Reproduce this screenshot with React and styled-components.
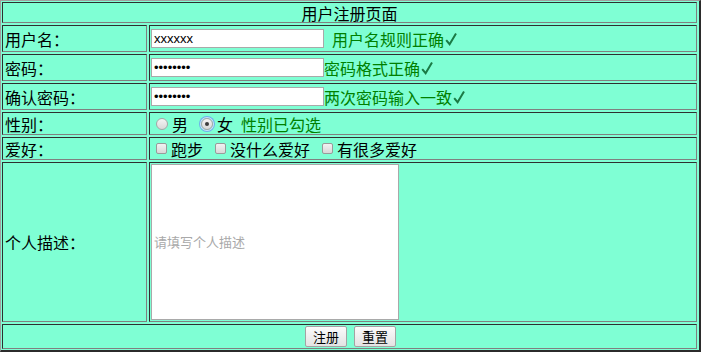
import React from 'react';
import styled, { createGlobalStyle } from 'styled-components';

const GlobalStyle = createGlobalStyle`
  body {
    margin: 0;
    background: #ffffff;
    font-family: "Noto Sans CJK SC", "Liberation Sans", sans-serif;
  }
`;

const Form = styled.form`
  display: grid;
  grid-template-columns: 145px 1fr;
  grid-template-rows: 21px 27px 27px 27px 23px 23px 160px 25px;
  gap: 2px;
  width: 701px;
  box-sizing: border-box;
  padding: 1px 2px 1px 1px;
  border-style: solid;
  border-width: 1px 2px 2px 1px;
  border-color: #a0a0a0 #2b2b2b #2b2b2b #a0a0a0;
  background: #7fffd4;
  font-size: 16px;
  color: #000;
`;

const Cell = styled.div`
  display: flex;
  align-items: center;
  justify-content: ${(p) => (p.$center ? 'center' : 'flex-start')};
  grid-column: ${(p) => (p.$span ? '1 / -1' : 'auto')};
  border: 1px solid;
  border-color: #2f2f2f #808080 #808080 #2f2f2f;
  padding: 1px;
  min-width: 0;
  white-space: nowrap;
  line-height: 1;
`;

const Label = styled.span`
  padding-left: 1px;
`;

const TextInput = styled.input`
  box-sizing: border-box;
  width: ${(p) => p.$w || 173}px;
  height: ${(p) => p.$h || 19}px;
  margin: 0;
  padding: 1px 2px;
  border: 1px solid #a9a9a9;
  background: #fff;
  font-family: "Liberation Sans", "Noto Sans CJK SC", sans-serif;
  font-size: 13px;
  color: #000;
  outline: none;

  &::placeholder {
    color: #a9a9a9;
    font-family: "Noto Sans CJK SC", sans-serif;
  }
`;

const Hint = styled.span`
  display: inline-flex;
  align-items: center;
  color: #008000;
  margin-left: ${(p) => p.$gap || 0}px;
`;

const TickIcon = styled.svg`
  width: 12px;
  height: 14px;
  margin-left: 1px;
  margin-top: 1px;
`;

const Tick = () => (
  <TickIcon viewBox="0 0 12 14">
    <path d="M1.2 8.2 L4.6 12.2 L11 1.5" fill="none" stroke="#1b7a45" strokeWidth="2" strokeLinejoin="miter" />
  </TickIcon>
);

const Choice = styled.span`
  display: inline-flex;
  align-items: center;
  margin-right: ${(p) => p.$after || 0}px;
`;

const Radio = styled.span`
  box-sizing: border-box;
  width: 12px;
  height: 12px;
  border-radius: 50%;
  border: 1px solid #a6a6a6;
  background: linear-gradient(#f4f4f4, #d9d9d9);
  display: inline-flex;
  align-items: center;
  justify-content: center;
  margin-right: 4px;

  ${(p) =>
    p.$checked &&
    `
    box-shadow: 0 0 0 1px #c9e3f9, 0 0 0 2px #6fb0ea;
    &::after {
      content: '';
      width: 4px;
      height: 4px;
      border-radius: 50%;
      background: #3c3c3c;
    }
  `}
`;

const Box = styled.span`
  box-sizing: border-box;
  width: 11px;
  height: 11px;
  border-radius: 2px;
  border: 1px solid #9a9a9a;
  background: linear-gradient(#f2f2f2, #d8d8d8);
  margin-right: 4px;
`;

const Button = styled.button`
  box-sizing: border-box;
  height: 21px;
  padding: 0 7px;
  border: 1px solid #a3a3a3;
  border-radius: 2px;
  background: linear-gradient(#fbfbfb, #e3e3e3);
  font-family: "Noto Sans CJK SC", sans-serif;
  font-size: 13px;
  line-height: 1;
  color: #000;
`;

const ButtonRow = styled.div`
  display: flex;
  gap: 7px;
  padding-left: 2px;
`;

const Options = styled.div`
  display: flex;
  align-items: center;
  padding-left: 5px;
`;

export default function App() {
  return (
    <>
      <GlobalStyle />
      <Form onSubmit={(e) => e.preventDefault()}>
        <Cell $span $center>用户注册页面</Cell>

        <Cell><Label>用户名：</Label></Cell>
        <Cell>
          <TextInput type="text" defaultValue="xxxxxx" />
          <Hint $gap={8}>用户名规则正确<Tick /></Hint>
        </Cell>

        <Cell><Label>密码：</Label></Cell>
        <Cell>
          <TextInput type="text" defaultValue="••••••••" />
          <Hint>密码格式正确<Tick /></Hint>
        </Cell>

        <Cell><Label>确认密码：</Label></Cell>
        <Cell>
          <TextInput type="text" defaultValue="••••••••" />
          <Hint>两次密码输入一致<Tick /></Hint>
        </Cell>

        <Cell><Label>性别：</Label></Cell>
        <Cell>
          <Options>
            <Choice $after={13}><Radio />男</Choice>
            <Choice><Radio $checked />女</Choice>
            <Hint $gap={8}>性别已勾选</Hint>
          </Options>
        </Cell>

        <Cell><Label>爱好：</Label></Cell>
        <Cell>
          <Options>
            <Choice $after={12}><Box />跑步</Choice>
            <Choice $after={12}><Box />没什么爱好</Choice>
            <Choice><Box />有很多爱好</Choice>
          </Options>
        </Cell>

        <Cell><Label>个人描述：</Label></Cell>
        <Cell>
          <TextInput type="text" $w={248} $h={156} placeholder="请填写个人描述" />
        </Cell>

        <Cell $span $center>
          <ButtonRow>
            <Button type="submit">注册</Button>
            <Button type="reset">重置</Button>
          </ButtonRow>
        </Cell>
      </Form>
    </>
  );
}
